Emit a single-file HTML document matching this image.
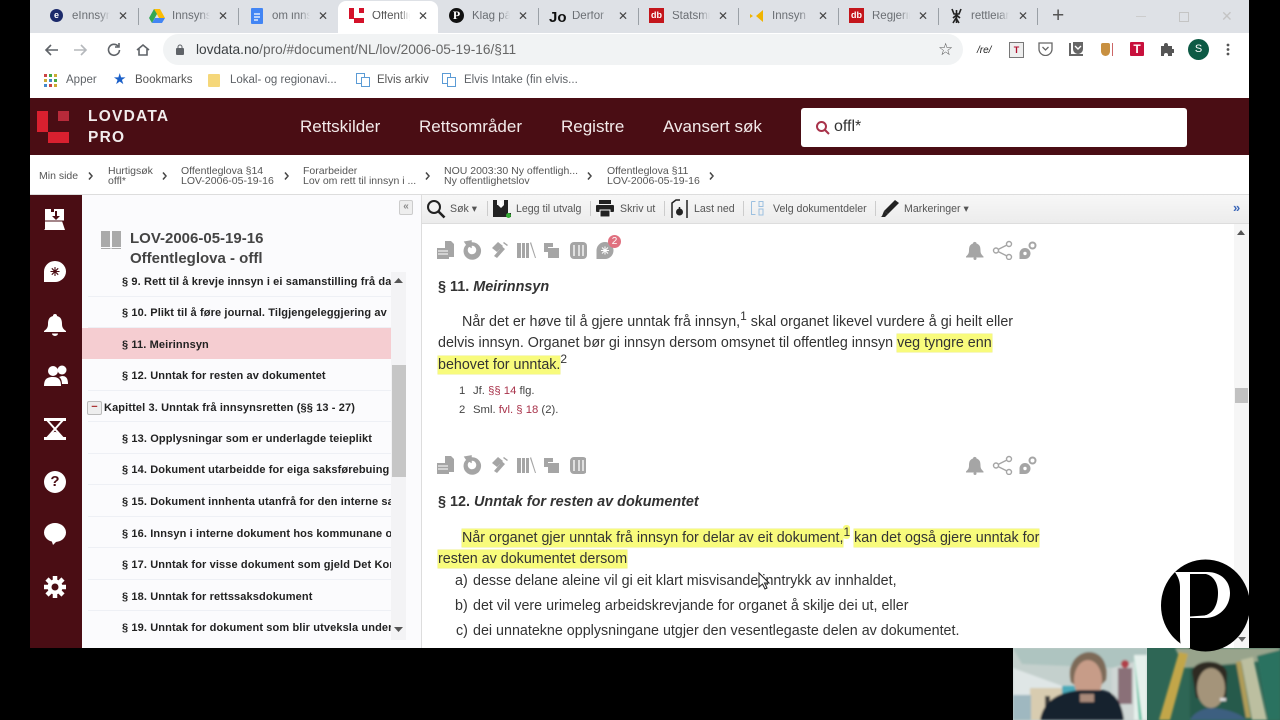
<!DOCTYPE html>
<html><head><meta charset="utf-8"><style>
html,body{margin:0;padding:0;background:#000;width:1280px;height:720px;overflow:hidden}
body{position:relative;font-family:"Liberation Sans",sans-serif}
.a,.t,svg{position:absolute}
.t{white-space:nowrap;line-height:1}
.tab{font-size:11.5px;color:#6a6e73;top:11px;width:38px;overflow:hidden;-webkit-mask-image:linear-gradient(90deg,#000 72%,transparent)}
.x{font-size:12px;color:#444;top:10px}
.sep{position:absolute;top:8px;width:1px;height:17px;background:#9aa0a6}
.nav{font-size:17px;color:#f3eaea;top:118px}
.cr{font-size:10.5px;color:#555;line-height:10px}
.s{font-size:11px;font-weight:bold;color:#222;letter-spacing:.12px}
.line{position:absolute;left:88px;width:303px;height:1px;background:#eef0f5}
.b{font-size:14.3px;color:#333}
.hl{background:#f8fb7c;box-shadow:0 0 0 .5px #eeef8a;padding:1px 0}
.tb{font-size:10.6px;color:#555}
.fn{font-size:11.3px;color:#444}
.ref{color:#a8324a}
sup{font-size:12px;line-height:0}
.bm{font-size:11.5px;color:#5f6368;top:75px}
</style></head><body>
<div class="a" style="left:30px;top:0;width:1219px;height:648px;background:#fff"></div>
<div class="a" style="left:30px;top:0;width:1219px;height:33px;background:#dee1e6"></div>
<div class="a" style="left:338px;top:1px;width:100px;height:32px;background:#fff;border-radius:8px 8px 0 0"></div>

<div class="a" style="left:50px;top:9px;width:13px;height:13px;border-radius:50%;background:#1c2a6b;color:#fff;font:bold 9px/13px 'Liberation Sans';text-align:center">e</div>
<div class="t tab" style="left:72px">eInnsyn</div><div class="t x" style="left:118px">✕</div><div class="sep" style="left:138px"></div>
<svg style="left:149px;top:9px" width="16" height="14" viewBox="0 0 16 14"><path d="M5 0h6l5 9H10z" fill="#fbbc04"/><path d="M5 0L0 9l3 5 5-9z" fill="#34a853"/><path d="M3 14h10l3-5H6z" fill="#4285f4"/></svg>
<div class="t tab" style="left:172px">Innsyns</div><div class="t x" style="left:218px">✕</div><div class="sep" style="left:238px"></div>
<svg style="left:251px;top:8px" width="12" height="16"><rect width="12" height="16" rx="1" fill="#4285f4"/><path d="M3 6h6M3 9h6M3 12h4" stroke="#fff" stroke-width="1.2"/></svg>
<div class="t tab" style="left:272px">om innsyn</div><div class="t x" style="left:318px">✕</div>
<svg style="left:349px;top:8px" width="16" height="15"><rect x="0" width="5" height="11" fill="#d4122a"/><rect x="10" width="5" height="5" fill="#d4122a"/><rect x="5" y="10" width="10" height="5" fill="#d4122a"/></svg>
<div class="t tab" style="left:372px;color:#555">Offentlig</div><div class="t x" style="left:418px">✕</div>
<div class="a" style="left:449px;top:8px;width:15px;height:15px;border-radius:50%;background:#111;color:#fff;font:bold 12px/15px 'Liberation Serif';text-align:center">P</div>
<div class="t tab" style="left:472px">Klag på</div><div class="t x" style="left:518px">✕</div><div class="sep" style="left:538px"></div>
<div class="t" style="left:549px;top:9px;font:bold 15px 'Liberation Sans';color:#111">Jo</div>
<div class="t tab" style="left:572px">Derfor</div><div class="t x" style="left:618px">✕</div><div class="sep" style="left:638px"></div>
<div class="a" style="left:649px;top:8px;width:15px;height:15px;background:#c4161c;color:#fff;font:bold 9px/15px 'Liberation Sans';text-align:center">db</div>
<div class="t tab" style="left:672px">Statsmin</div><div class="t x" style="left:718px">✕</div><div class="sep" style="left:738px"></div>
<svg style="left:750px;top:10px" width="14" height="12"><path d="M0 4l3 2-3 2zM13 0v12L6 6z" fill="#f0b400"/></svg>
<div class="t tab" style="left:772px">Innsyn</div><div class="t x" style="left:818px">✕</div><div class="sep" style="left:838px"></div>
<div class="a" style="left:849px;top:8px;width:15px;height:15px;background:#c4161c;color:#fff;font:bold 9px/15px 'Liberation Sans';text-align:center">db</div>
<div class="t tab" style="left:872px">Regjerin</div><div class="t x" style="left:918px">✕</div><div class="sep" style="left:938px"></div>
<svg style="left:950px;top:8px" width="13" height="16" fill="none" stroke="#222" stroke-width="1.600"><path d="M6.500 2v13M2 1l2 5h5l2-5M3 10l3.500-3L10 10M3 15l3-5 3 5"/></svg>
<div class="t tab" style="left:971px">rettleiar</div><div class="t x" style="left:1018px">✕</div><div class="sep" style="left:1037px"></div>
<div class="t" style="left:1052px;top:5px;font-size:21px;color:#555">+</div>
<div class="a" style="left:1136px;top:16px;width:10px;height:1px;background:#ccc"></div>
<div class="a" style="left:1179px;top:12px;width:8px;height:8px;border:1px solid #c4c4c4"></div>
<div class="t" style="left:1221px;top:9px;font-size:14px;color:#c4c4c4">✕</div>

<svg style="left:44px;top:42px" width="110" height="16" fill="none" stroke="#5f6368" stroke-width="1.6"><path d="M14 8H2M7 3L2 8l5 5"/><path d="M30 8h12M37 3l5 5-5 5" stroke="#b5b8bc"/><path d="M74 4a5.500 5.500 0 1 0 1.500 4M75 1v4h-4"/><path d="M93 8l6-5 6 5M95 7v6h8V7"/></svg>
<div class="a" style="left:163px;top:34px;width:800px;height:31px;background:#f1f3f4;border-radius:16px"></div>
<svg style="left:176px;top:44px" width="9" height="11"><rect y="4" width="8" height="7" rx="1" fill="#5f6368"/><path d="M2 4V3a2 2 0 0 1 4 0v1" fill="none" stroke="#5f6368"/></svg>
<div class="t" style="left:196px;top:43px;font-size:13.7px;color:#3c4043"><span>lovdata.no</span><span style="color:#666">/pro/#document/NL/lov/2006-05-19-16/§11</span></div>
<div class="t" style="left:938px;top:41px;font-size:17px;color:#555">☆</div>
<div class="t" style="left:977px;top:45px;font:italic 10px 'Liberation Sans';color:#222">/re/</div>
<div class="a" style="left:1009px;top:42px;width:13px;height:14px;border:1px solid #777;background:#eee;color:#b01030;font:bold 9px/14px 'Liberation Sans';text-align:center">T</div>
<svg style="left:1038px;top:42px" width="15" height="14" fill="none" stroke="#666" stroke-width="1.300"><path d="M1 1h13v6a6.500 6.500 0 0 1-13 0z"/><path d="M4.500 5l3 3 3-3"/></svg>
<svg style="left:1068px;top:41px" width="16" height="16" fill="none" stroke="#666" stroke-width="1.400"><path d="M3 2H1v13h14v-2H3z" fill="#666" stroke="none"/><path d="M5 1h10v7a5 5 0 0 1-10 0z" fill="#666" stroke="none"/><path d="M7 5l3 3 3-3" stroke="#fff"/></svg>
<div class="a" style="left:1101px;top:43px;width:9px;height:13px;background:#c89040;border-radius:2px 2px 5px 5px"></div><div class="a" style="left:1112px;top:43px;width:1px;height:13px;background:#c66"></div>
<div class="a" style="left:1130px;top:42px;width:14px;height:14px;background:#c8103c;color:#fff;font:bold 12px/14px 'Liberation Sans';text-align:center;border-radius:1px">T</div>
<svg style="left:1160px;top:42px" width="14" height="14"><path d="M1 4h3V3a2 2 0 0 1 4 0v1h4v3h1a2 2 0 0 1 0 4h-1v3H8v-1a2 2 0 0 0-4 0v1H1z" fill="#555"/></svg>
<div class="a" style="left:1188px;top:39px;width:21px;height:21px;border-radius:50%;background:#0d5a45;color:#fff;font:11px/21px 'Liberation Sans';text-align:center">S</div>
<svg style="left:1226px;top:43px" width="4" height="13" fill="#555"><circle cx="2" cy="2" r="1.400"/><circle cx="2" cy="6.500" r="1.400"/><circle cx="2" cy="11" r="1.400"/></svg>

<svg style="left:44px;top:74px" width="13" height="13"><rect width="3" height="3" fill="#c44"/><rect x="5" width="3" height="3" fill="#4a4"/><rect x="10" width="3" height="3" fill="#ca3"/><rect y="5" width="3" height="3" fill="#ca3"/><rect x="5" y="5" width="3" height="3" fill="#48c"/><rect x="10" y="5" width="3" height="3" fill="#4a4"/><rect y="10" width="3" height="3" fill="#48c"/><rect x="5" y="10" width="3" height="3" fill="#c44"/><rect x="10" y="10" width="3" height="3" fill="#ca3"/></svg>
<div class="t bm" style="left:66px">Apper</div>
<div class="t" style="left:113px;top:72px;font-size:15px;color:#1a5fc8">★</div>
<div class="t bm" style="left:135px;color:#555">Bookmarks</div>
<div class="a" style="left:208px;top:74px;width:12px;height:13px;background:#f5d77a;border-radius:1px"></div>
<div class="t bm" style="left:230px">Lokal- og regionavi...</div>
<svg style="left:356px;top:73px" width="14" height="14" fill="none" stroke="#5b9bd5"><rect x=".5" y=".5" width="8" height="10"/><rect x="5.500" y="4.500" width="8" height="9" fill="#fff"/></svg>
<div class="t bm" style="left:377px;color:#555">Elvis arkiv</div>
<svg style="left:442px;top:73px" width="14" height="14" fill="none" stroke="#5b9bd5"><rect x=".5" y=".5" width="8" height="10"/><rect x="5.500" y="4.500" width="8" height="9" fill="#fff"/></svg>
<div class="t bm" style="left:464px">Elvis Intake (fin elvis...</div>

<div class="a" style="left:30px;top:98px;width:1219px;height:57px;background:#4a0d14"></div>
<svg style="left:36px;top:111px" width="34" height="33" fill="#d8202f"><rect x="1" y="0" width="11" height="21"/><rect x="22" y="0" width="11" height="10" fill="#b82a3a"/><rect x="12" y="21" width="21" height="11"/></svg>
<div class="t" style="left:88px;top:109px;font-size:15.500px;font-weight:bold;color:#f2ecec;letter-spacing:1.250px">LOVDATA</div>
<div class="t" style="left:88px;top:130px;font-size:15.500px;font-weight:bold;color:#f2ecec;letter-spacing:1.250px">PRO</div>
<div class="t nav" style="left:300px">Rettskilder</div>
<div class="t nav" style="left:419px">Rettsområder</div>
<div class="t nav" style="left:561px">Registre</div>
<div class="t nav" style="left:663px">Avansert søk</div>
<div class="a" style="left:801px;top:108px;width:386px;height:39px;background:#fff;border-radius:3px"></div>
<svg style="left:815px;top:120px" width="15" height="15" fill="none" stroke="#a8324a" stroke-width="2"><circle cx="6.500" cy="6.500" r="4.500"/><path d="M10 10l4 4"/></svg>
<div class="t" style="left:834px;top:119px;font-size:16px;color:#333">offl*</div>

<div class="t" style="left:39px;top:171px;font-size:10.500px;color:#555">Min side</div>
<div class="t cr" style="left:108px;top:166px">Hurtigsøk<br>offl*</div>
<div class="t cr" style="left:181px;top:166px">Offentleglova §14<br>LOV-2006-05-19-16</div>
<div class="t cr" style="left:303px;top:166px">Forarbeider<br>Lov om rett til innsyn i ...</div>
<div class="t cr" style="left:444px;top:166px">NOU 2003:30 Ny offentligh...<br>Ny offentlighetslov</div>
<div class="t cr" style="left:607px;top:166px">Offentleglova §11<br>LOV-2006-05-19-16</div>
<svg style="left:80px;top:170px" width="650" height="12" fill="none" stroke="#444" stroke-width="1.500"><path d="M9 2.500l3 3.500-3 3.500M83 2.500l3 3.500-3 3.500M205 2.500l3 3.500-3 3.500M346 2.500l3 3.500-3 3.500M508 2.500l3 3.500-3 3.500M630 2.500l3 3.500-3 3.500"/></svg>
<div class="a" style="left:30px;top:194px;width:1219px;height:1px;background:#ddd"></div>

<div class="a" style="left:30px;top:195px;width:52px;height:453px;background:#4a0d14"></div>
<svg style="left:44px;top:208px" width="22" height="24" fill="#fff"><path d="M1 1h6v3h3V1h10v12h-2L21 22H0l1-1z"/><path d="M11 3v5H8l4 4 4-4h-3V3z" fill="#4a0d14"/><path d="M1 13h19" stroke="#4a0d14"/></svg>
<svg style="left:44px;top:261px" width="22" height="22"><path d="M11 0a11 10.500 0 0 1 0 21H0V10.500A11 10.500 0 0 1 11 0z" fill="#fff"/><path d="M11 6v9M6.500 10.500h9M7.800 7.300l6.400 6.400M14.200 7.300l-6.400 6.400" stroke="#4a0d14" stroke-width="1.100"/></svg>
<svg style="left:44px;top:313px" width="22" height="23" fill="#fff"><path d="M11 1a2 2 0 0 1 2 2c4 1 5 4 5 8 0 3 1 5 4 7v1H0v-1c3-2 4-4 4-7 0-4 1-7 5-8a2 2 0 0 1 2-2z"/><path d="M8 20.500a3 2.500 0 0 0 6 0z"/></svg>
<svg style="left:44px;top:365px" width="24" height="22" fill="#fff"><circle cx="9" cy="6" r="5"/><circle cx="18" cy="5" r="4.500"/><path d="M0 21c0-7 3-9 9-9s8 3 8 9zM18 11c4 0 6 2 6 8h-6c0-3-1-6-3-7z"/></svg>
<svg style="left:44px;top:418px" width="22" height="22" fill="none" stroke="#fff" stroke-width="2"><path d="M0 1.500h22M0 20.500h22" stroke-width="3"/><path d="M3 2l8 9-8 9M19 2l-8 9 8 9"/><path d="M5 19c2-4 4-5 6-5s4 1 6 5z" fill="#fff" stroke="none"/></svg>
<div class="a" style="left:44px;top:471px;width:22px;height:22px;border-radius:50%;background:#fff;color:#4a0d14;font:bold 15px/22px 'Liberation Sans';text-align:center">?</div>
<svg style="left:44px;top:523px" width="22" height="22" fill="#fff"><ellipse cx="11" cy="9.500" rx="11" ry="9.500"/><path d="M7 16l6 2-4 4z"/></svg>
<svg style="left:44px;top:576px" width="22" height="22" fill="#fff"><circle cx="11" cy="11" r="7.500"/><g stroke="#fff" stroke-width="4.500"><path d="M11 0v22M0 11h22M3 3l16 16M19 3L3 19"/></g><circle cx="11" cy="11" r="3.500" fill="#4a0d14"/></svg>

<div class="a" style="left:82px;top:195px;width:339px;height:453px;background:#fbfbfd"></div>
<div class="a" style="left:421px;top:195px;width:1px;height:453px;background:#ddd"></div>
<div class="a" style="left:399px;top:200px;width:12px;height:13px;border:1px solid #ccc;border-radius:2px;background:#eee;color:#888;font:bold 10px/12px 'Liberation Sans';text-align:center">«</div>
<svg style="left:101px;top:230px" width="20" height="20" fill="#aaa"><path d="M0 1h9v16H0zM11 1h9v16h-9z"/><path d="M0 18h9l1 1 1-1h9v1H0z"/></svg>
<div class="t" style="left:130px;top:229px;font-size:15px;font-weight:bold;color:#444;line-height:19.500px">LOV-2006-05-19-16<br>Offentleglova - offl</div>

<div class="a" style="left:391px;top:272px;width:15px;height:368px;background:#f3f3f5"></div>
<div class="a" style="left:392px;top:365px;width:14px;height:112px;background:#c6c6c6"></div>
<svg style="left:394px;top:278px" width="9" height="5"><path d="M0 5l4.500-5 4.500 5z" fill="#555"/></svg>
<svg style="left:394px;top:627px" width="9" height="5"><path d="M0 0l4.500 5 4.500-5z" fill="#555"/></svg>
<div class="a" style="left:82px;top:328px;width:309px;height:31px;background:#f5cdd1"></div>
<div class="line" style="top:296px"></div><div class="line" style="top:327px"></div><div class="line" style="top:390px"></div><div class="line" style="top:421px"></div><div class="line" style="top:453px"></div><div class="line" style="top:484px"></div><div class="line" style="top:516px"></div><div class="line" style="top:547px"></div><div class="line" style="top:579px"></div><div class="line" style="top:610px"></div>
<div class="a" style="left:82px;top:272px;width:309px;height:368px;overflow:hidden">
<div class="t s" style="left:40px;top:5px">§ 9. Rett til å krevje innsyn i ei samanstilling frå da</div>
<div class="t s" style="left:40px;top:36px">§ 10. Plikt til å føre journal. Tilgjengeleggjering av</div>
<div class="t s" style="left:40px;top:68px">§ 11. Meirinnsyn</div>
<div class="t s" style="left:40px;top:99px">§ 12. Unntak for resten av dokumentet</div>
<div class="t s" style="left:22px;top:131px">Kapittel 3. Unntak frå innsynsretten (§§ 13 - 27)</div>
<div class="t s" style="left:40px;top:162px">§ 13. Opplysningar som er underlagde teieplikt</div>
<div class="t s" style="left:40px;top:193px">§ 14. Dokument utarbeidde for eiga saksførebuing</div>
<div class="t s" style="left:40px;top:225px">§ 15. Dokument innhenta utanfrå for den interne saksførebuinga</div>
<div class="t s" style="left:40px;top:257px">§ 16. Innsyn i interne dokument hos kommunane og fylkeskommunane</div>
<div class="t s" style="left:40px;top:288px">§ 17. Unntak for visse dokument som gjeld Det Kongelege hoff</div>
<div class="t s" style="left:40px;top:320px">§ 18. Unntak for rettssaksdokument</div>
<div class="t s" style="left:40px;top:351px">§ 19. Unntak for dokument som blir utveksla under</div>
</div>
<div class="a" style="left:87px;top:401px;width:13px;height:12px;border:1px solid #bbb;border-radius:2px;background:#eee;color:#a33;font:bold 11px/11px 'Liberation Sans';text-align:center">−</div>

<div class="a" style="left:422px;top:195px;width:827px;height:28px;background:linear-gradient(#f7f7f7,#ececec);border-bottom:1px solid #ddd"></div>
<svg style="left:426px;top:199px" width="20" height="20" fill="none" stroke="#222" stroke-width="2"><circle cx="8" cy="8" r="6"/><path d="M12.500 12.500l6 6" stroke-width="2.600"/></svg>
<div class="t tb" style="left:450px;top:204px">Søk ▾</div>
<div class="a" style="left:487px;top:201px;width:1px;height:15px;background:#ccc"></div>
<svg style="left:493px;top:200px" width="18" height="18" fill="#222"><path d="M0 0h4v5h7V0h4v13h3v-1 5H0z"/><path d="M7 1v4H5l3 3 3-3H9V1z" fill="#fff"/><circle cx="15.500" cy="15.500" r="2.500" fill="#3a3"/></svg>
<div class="t tb" style="left:516px;top:204px">Legg til utvalg</div>
<div class="a" style="left:590px;top:201px;width:1px;height:15px;background:#ccc"></div>
<svg style="left:596px;top:200px" width="18" height="17" fill="#222"><rect x="3" width="12" height="4"/><rect y="5" width="18" height="7" rx="1"/><rect x="4" y="10" width="10" height="7" stroke="#fff"/></svg>
<div class="t tb" style="left:620px;top:204px">Skriv ut</div>
<div class="a" style="left:664px;top:201px;width:1px;height:15px;background:#ccc"></div>
<svg style="left:671px;top:199px" width="18" height="20" fill="none" stroke="#222" stroke-width="1.500"><path d="M1 19V4l4-3h4M16 1v18"/><path d="M8.500 8v3" /><circle cx="8.500" cy="13" r="3.500" fill="#222" stroke="none"/></svg>
<div class="t tb" style="left:694px;top:204px">Last ned</div>
<div class="a" style="left:743px;top:201px;width:1px;height:15px;background:#ccc"></div>
<svg style="left:751px;top:201px" width="13" height="15" fill="none" stroke="#9cc0e0"><path d="M.5.500h4M.5.500v13h4M8 .5h4v5H8zM8 8h4v6H8z"/></svg>
<div class="t tb" style="left:773px;top:204px">Velg dokumentdeler</div>
<div class="a" style="left:875px;top:201px;width:1px;height:15px;background:#ccc"></div>
<svg style="left:880px;top:200px" width="20" height="18"><path d="M15 0l4 3-11 11-4-3z" fill="#222"/><path d="M4 11l-2 5c-1 1-1 1-2 1h5l3-3z" fill="#222"/></svg>
<div class="t tb" style="left:904px;top:204px">Markeringer ▾</div>
<div class="t" style="left:1233px;top:201px;font-size:13px;font-weight:bold;color:#3b66b8">»</div>

<div class="a" style="left:1234px;top:224px;width:15px;height:424px;background:#f6f6f6"></div>
<svg style="left:1237px;top:230px" width="8" height="5"><path d="M0 5l4-5 4 5z" fill="#555"/></svg>
<div class="a" style="left:1235px;top:388px;width:13px;height:15px;background:#c1c1c1"></div>

<!-- doc icons row 1 -->
<svg style="left:436px;top:240px" width="190" height="20" fill="#a5a5a5">
<path d="M5 8h4V1h6l3 3v13h-5v2H1V8z"/><path d="M2 11h10M2 14h10" stroke="#fff"/>
<path d="M36 3a8 8 0 1 1-5 2l-2-3 6-1 0 6-2-1a5 5 0 1 0 3-1z" stroke="#a5a5a5" stroke-width="1.500"/>
<path d="M63 4l6 5-8 9-3-2 6-7-3-2zM68 2l4 3-1 1-4-3z"/><path d="M56 8l6-6 5 4-6 6z"/>
<path d="M81 3h4v15h-4zM86 3h3v15h-3zM90 3h3v15h-3zM94 3l1-1 5 16-1 0z"/>
<path d="M108 3h9v4h-5v5h-4z"/><rect x="112" y="8" width="11" height="10"/>
<rect x="134" y="2" width="17" height="17" rx="4"/><path d="M138 5v11M143 5v11M147 5v11" stroke="#fff" stroke-width="1.300"/>
<path d="M169 2a8.500 8.500 0 0 1 0 17h-8.500v-8.500A8.500 8.500 0 0 1 169 2z"/>
<path d="M169 6.500v8M165 10.500h8M166 7.500l6 6M172 7.500l-6 6" stroke="#fff"/>
</svg>
<div class="a" style="left:608px;top:235px;width:13px;height:13px;border-radius:50%;background:#e0707f;color:#fff;font:10px/13px 'Liberation Sans';text-align:center">2</div>
<svg style="left:966px;top:240px" width="72" height="20"><path d="M9 1a1.500 1.500 0 0 1 1.500 1.500c3 1 4 3 4 7 0 3 1 4 3 6v1H0v-1c2-2 3-3 3-6 0-4 1-6 4-7A1.500 1.500 0 0 1 9 1z" fill="#a5a5a5" transform="translate(0 1)"/><circle cx="9" cy="18.500" r="1.500" fill="#a5a5a5"/>
<g fill="none" stroke="#a5a5a5" stroke-width="1.400"><circle cx="43" cy="4" r="2.500"/><circle cx="30" cy="10.500" r="2.500"/><circle cx="43" cy="17" r="2.500"/><path d="M32 9.500l9-4.500M32 11.500l9 4.500"/></g>
<path d="M59 8a5.500 5.500 0 0 1 0 11h-5.500v-5.500A5.500 5.500 0 0 1 59 8z" fill="#a5a5a5"/><circle cx="59" cy="13.500" r="1.700" fill="#fff"/><circle cx="66.500" cy="5.500" r="3" fill="none" stroke="#a5a5a5" stroke-width="2"/></svg>

<div class="t" style="left:438px;top:280px;font-size:14.400px;font-weight:bold;color:#333">§ 11. <i>Meirinnsyn</i></div>
<div class="t b" style="left:462px;top:315px">Når det er høve til å gjere unntak frå innsyn,<sup>1</sup> skal organet likevel vurdere å gi heilt eller</div>
<div class="t b" style="left:438px;top:336px">delvis innsyn. Organet bør gi innsyn dersom omsynet til offentleg innsyn <span class="hl">veg tyngre enn</span></div>
<div class="t b" style="left:438px;top:358px"><span class="hl">behovet for unntak.</span><sup>2</sup></div>
<div class="t fn" style="left:459px;top:386px">1</div><div class="t fn" style="left:473px;top:386px">Jf. <span class="ref">§§ 14</span> flg.</div>
<div class="t fn" style="left:459px;top:405px">2</div><div class="t fn" style="left:473px;top:405px">Sml. <span class="ref">fvl. § 18</span> (2).</div>

<svg style="left:436px;top:455px" width="150" height="20" fill="#a5a5a5">
<path d="M5 8h4V1h6l3 3v13h-5v2H1V8z"/><path d="M2 11h10M2 14h10" stroke="#fff"/>
<path d="M36 3a8 8 0 1 1-5 2l-2-3 6-1 0 6-2-1a5 5 0 1 0 3-1z" stroke="#a5a5a5" stroke-width="1.500"/>
<path d="M63 4l6 5-8 9-3-2 6-7-3-2zM68 2l4 3-1 1-4-3z"/><path d="M56 8l6-6 5 4-6 6z"/>
<path d="M81 3h4v15h-4zM86 3h3v15h-3zM90 3h3v15h-3zM94 3l1-1 5 16-1 0z"/>
<path d="M108 3h9v4h-5v5h-4z"/><rect x="112" y="8" width="11" height="10"/>
<rect x="134" y="2" width="17" height="17" rx="4"/><path d="M138 5v11M143 5v11M147 5v11" stroke="#fff" stroke-width="1.300"/>
</svg>
<svg style="left:966px;top:455px" width="72" height="20"><path d="M9 1a1.500 1.500 0 0 1 1.500 1.500c3 1 4 3 4 7 0 3 1 4 3 6v1H0v-1c2-2 3-3 3-6 0-4 1-6 4-7A1.500 1.500 0 0 1 9 1z" fill="#a5a5a5" transform="translate(0 1)"/><circle cx="9" cy="18.500" r="1.500" fill="#a5a5a5"/>
<g fill="none" stroke="#a5a5a5" stroke-width="1.400"><circle cx="43" cy="4" r="2.500"/><circle cx="30" cy="10.500" r="2.500"/><circle cx="43" cy="17" r="2.500"/><path d="M32 9.500l9-4.500M32 11.500l9 4.500"/></g>
<path d="M59 8a5.500 5.500 0 0 1 0 11h-5.500v-5.500A5.500 5.500 0 0 1 59 8z" fill="#a5a5a5"/><circle cx="59" cy="13.500" r="1.700" fill="#fff"/><circle cx="66.500" cy="5.500" r="3" fill="none" stroke="#a5a5a5" stroke-width="2"/></svg>

<div class="t" style="left:438px;top:495px;font-size:14.400px;font-weight:bold;color:#333">§ 12. <i>Unntak for resten av dokumentet</i></div>
<div class="t b" style="left:462px;top:531px"><span class="hl">Når organet gjer unntak frå innsyn for delar av eit dokument,</span><sup style="background:#f8fb7c;border-radius:3px">1</sup> <span class="hl">kan det også gjere unntak for</span></div>
<div class="t b" style="left:438px;top:552px"><span class="hl">resten av dokumentet dersom</span></div>
<div class="t b" style="left:455px;top:574px">a)</div><div class="t b" style="left:473px;top:574px">desse delane aleine vil gi eit klart misvisande inntrykk av innhaldet,</div>
<div class="t b" style="left:455px;top:599px">b)</div><div class="t b" style="left:473px;top:599px">det vil vere urimeleg arbeidskrevjande for organet å skilje dei ut, eller</div>
<div class="t b" style="left:456px;top:624px">c)</div><div class="t b" style="left:473px;top:624px">dei unnatekne opplysningane utgjer den vesentlegaste delen av dokumentet.</div>
<svg style="left:758px;top:572px" width="12" height="18"><path d="M1 1v14l3.500-3 2.500 5 2-1-2.500-5H11z" fill="#fff" stroke="#222"/></svg>

<!-- webcam left -->
<svg style="left:1013px;top:648px" width="134" height="72" viewBox="1013 648 134 72">
<defs><filter id="bl"><feGaussianBlur stdDeviation="1.100"/></filter></defs>
<rect x="1013" y="648" width="134" height="72" fill="#c4d0cd"/>
<g filter="url(#bl)">
<path d="M1013 648h134v14l-30 6-95-4z" fill="#aec4c0"/>
<path d="M1013 668l55 20v32h-55z" fill="#dfe6e6"/>
<rect x="1030" y="688" width="38" height="32" fill="#d8ccb0"/>
<rect x="1045" y="696" width="5" height="14" fill="#3a3a3a"/>
<rect x="1062" y="686" width="14" height="8" fill="#4aa8b8"/>
<rect x="1013" y="695" width="18" height="25" fill="#9fb8c0"/>
<path d="M1112 668l22-6v58h-22z" fill="#cfd6d4"/>
<rect x="1134" y="655" width="13" height="65" fill="#e6f0ec"/>
<path d="M1134 655l8 65h-3z" fill="#5cc0a0"/>
<rect x="1118" y="668" width="14" height="36" fill="#8a7078"/>
<circle cx="1125" cy="664" r="4" fill="#b0404a"/>
<path d="M1071 682c-5-22 10-30 18-30s20 6 17 28l-6 6h-24z" fill="#7d6a58"/>
<ellipse cx="1088" cy="680" rx="14" ry="20" fill="#c79c88"/>
<path d="M1040 720c4-22 22-28 40-30h22c14 2 20 14 22 30z" fill="#13202e"/>
<rect x="1080" y="694" width="14" height="8" fill="#a98a7a"/>
</g></svg>
<!-- webcam right -->
<svg style="left:1147px;top:648px" width="133" height="72" viewBox="1147 648 133 72">
<rect x="1147" y="648" width="133" height="72" fill="#2e6655"/>
<g filter="url(#bl)">
<path d="M1175 648h105v10l-25 4-70 6z" fill="#98a48c"/>
<path d="M1190 668l48-4 10 54h-58z" fill="#265a4c"/>
<path d="M1179 652l9 2-18 66h-11z" fill="#c2a648"/>
<path d="M1236 662l5-1 10 57h-5z" fill="#b09c58"/>
<path d="M1241 660l12-3 14 63h-15z" fill="#bcbfa0"/>
<path d="M1257 656l23-6v70h-12z" fill="#2a7260"/>
<path d="M1192 672c2-14 34-14 35 2l-1 24-30 0z" fill="#2f2a22"/>
<ellipse cx="1211" cy="688" rx="14" ry="20" fill="#a4947a"/>
<path d="M1190 720c4-8 14-12 22-12s28 4 34 12z" fill="#3d5f80"/>
<rect x="1220" y="698" width="6" height="3" fill="#ddd"/>
</g></svg>

<!-- logo -->
<svg style="left:1161px;top:559px" width="89" height="94">
<ellipse cx="44.500" cy="46.500" rx="44.500" ry="46" fill="#000"/>
<path d="M14 13H46C60 13 69 22 69 34C69 48 58 59 44 59H29V89H21C19 85 19 80 19 75V28C19 22 17 18 14 13Z" fill="#fff"/>
<path d="M29 15H45C53 17 57 25 57 34C57 46 52 55 43 56.500L29 57.500Z" fill="#000"/>
</svg>
<svg style="left:1238px;top:637px" width="8" height="5"><path d="M0 0l4 5 4-5z" fill="#666"/></svg>
</body></html>
